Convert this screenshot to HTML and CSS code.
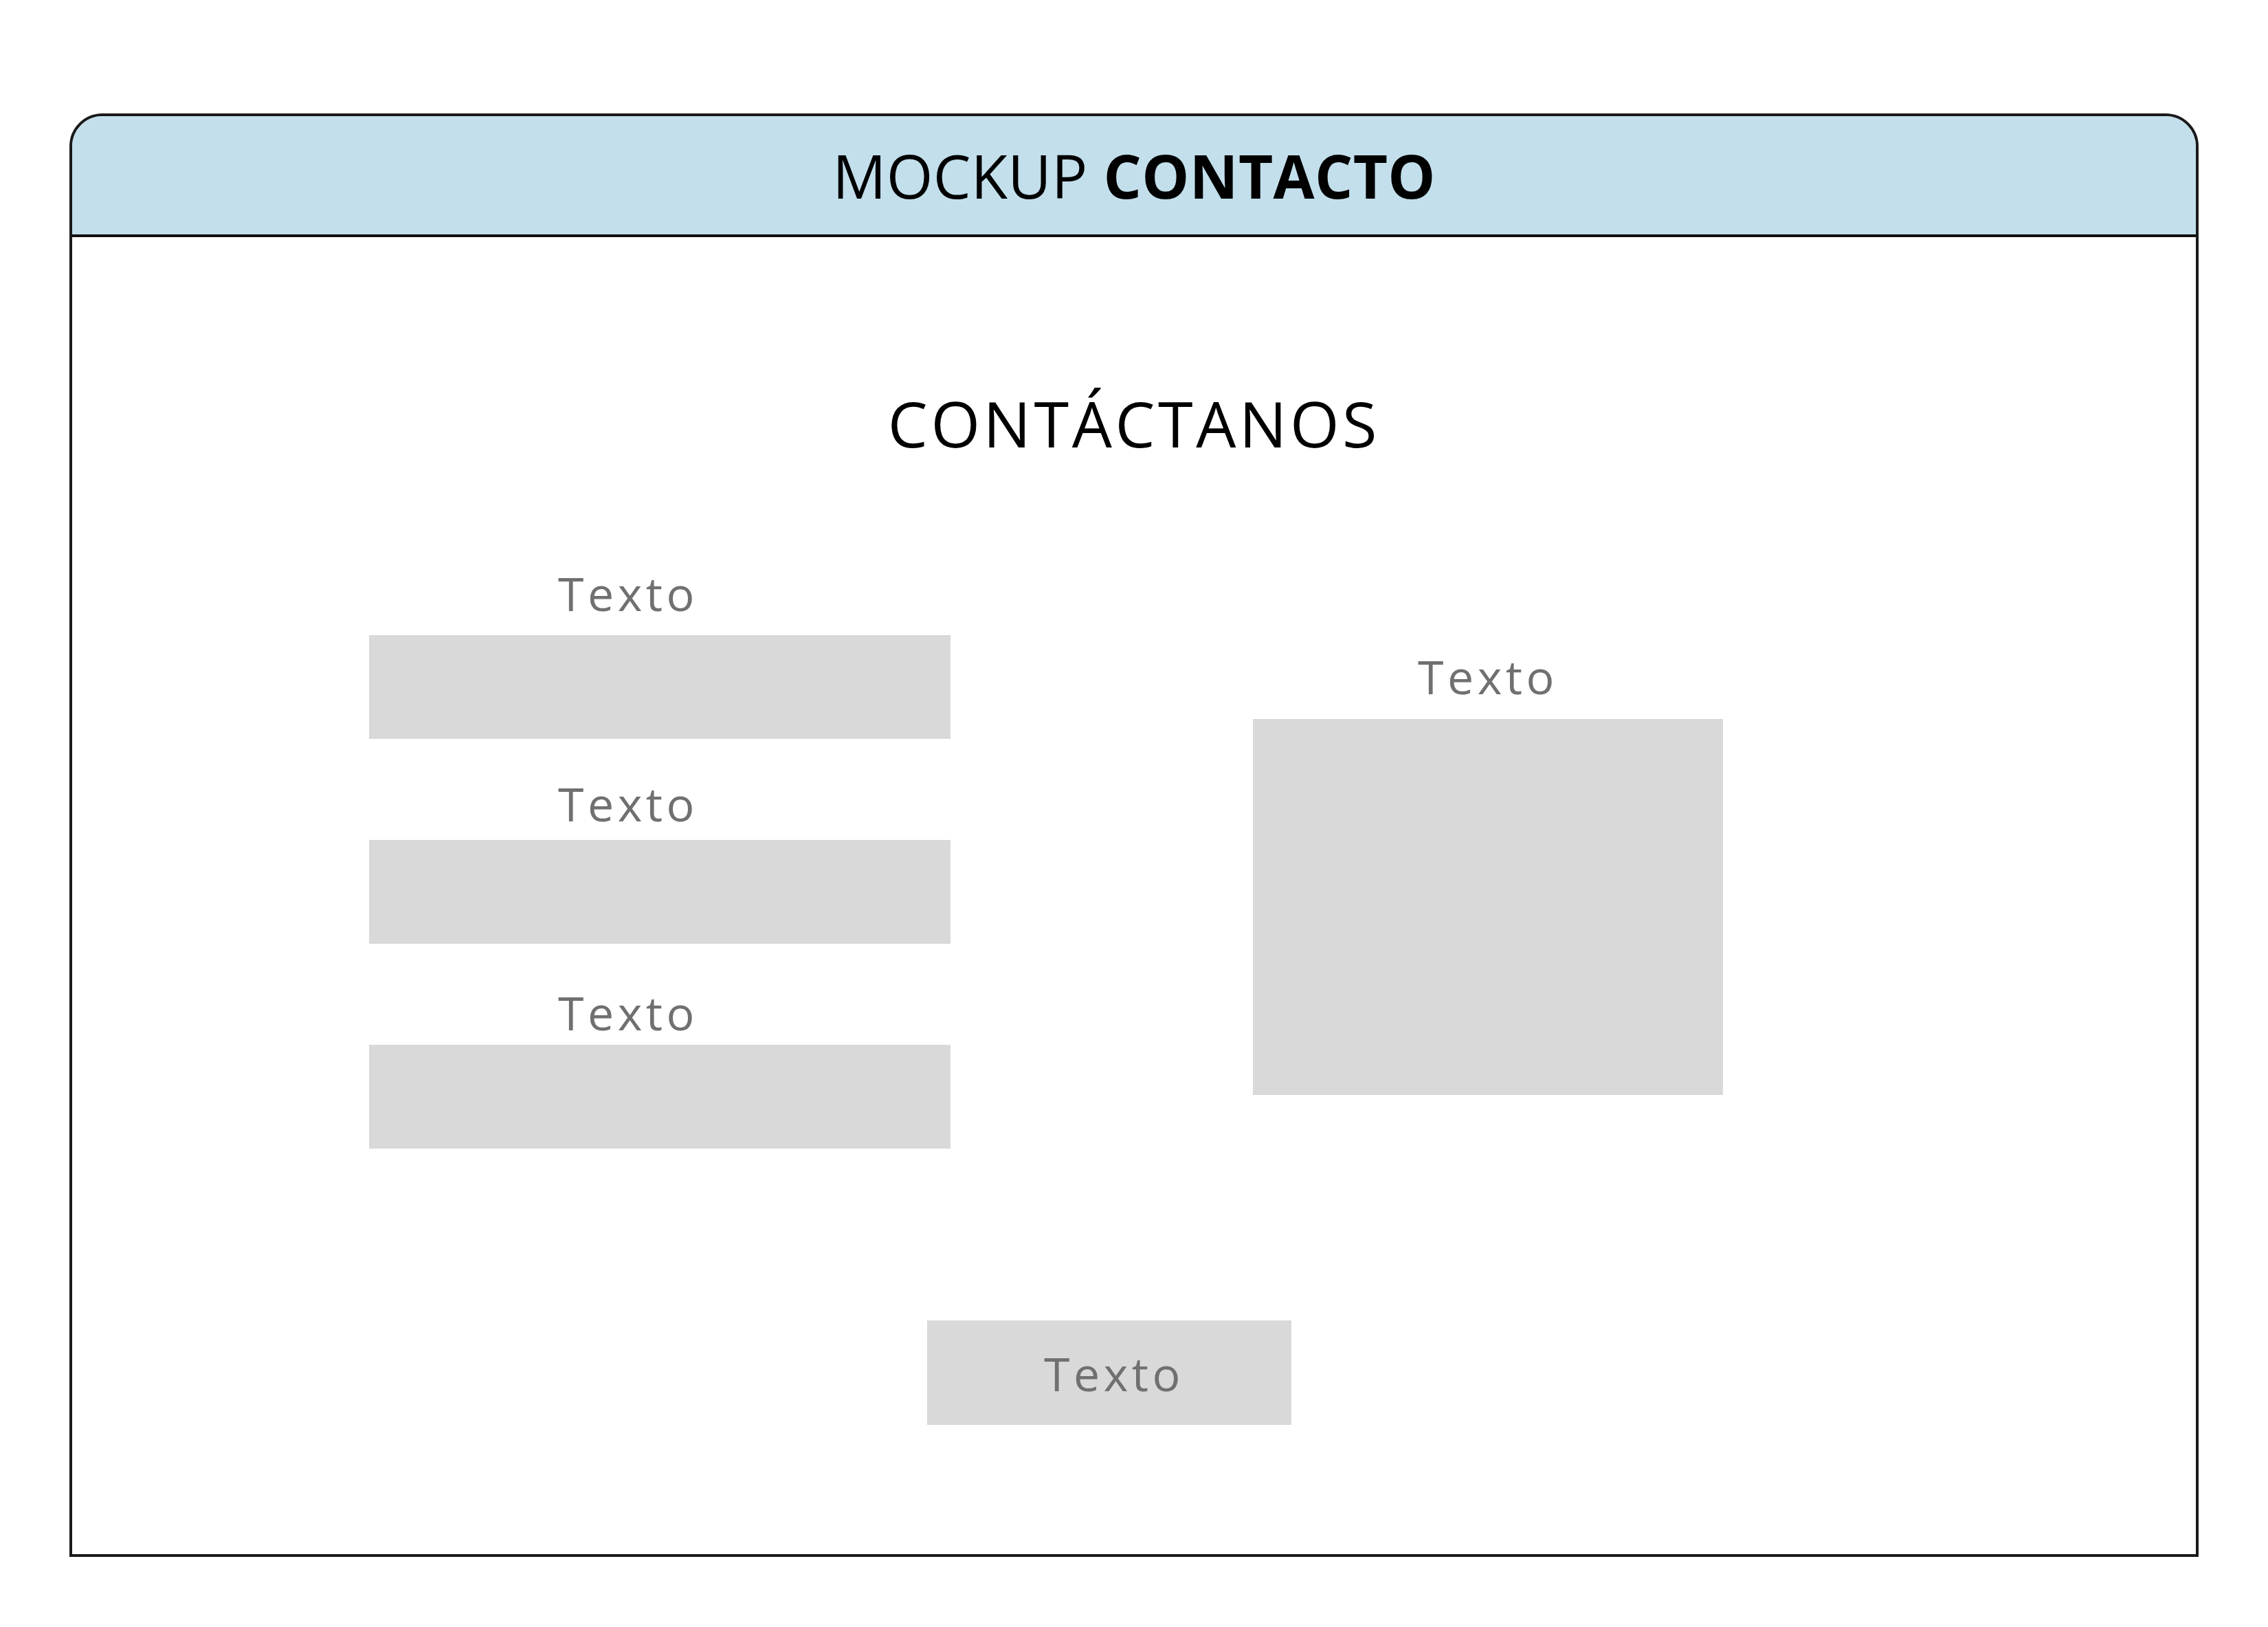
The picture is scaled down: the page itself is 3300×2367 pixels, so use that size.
FILE: index.html
```html
<!DOCTYPE html>
<html lang="es">
<head>
  <meta charset="UTF-8">
  <title>Mockup contacto</title>
  <link rel="stylesheet" href="styles.css">
</head>
<body>
  <div class="frame">
    <div class="header">
      <h1 class="title">MOCKUP <strong>CONTACTO</strong></h1>
    </div>
    <div class="content">
      <h2 class="heading">CONTÁCTANOS</h2>
      <div class="form">
        <div class="col left">
          <div class="field">
            <span class="label">Texto</span>
            <div class="input"></div>
          </div>
          <div class="field second">
            <span class="label">Texto</span>
            <div class="input"></div>
          </div>
          <div class="field third">
            <span class="label">Texto</span>
            <div class="input"></div>
          </div>
        </div>
        <div class="col right">
          <span class="label centered">Texto</span>
          <div class="textarea"></div>
        </div>
      </div>
      <div class="actions">
        <div class="button">Texto</div>
      </div>
    </div>
  </div>
</body>
</html>
```

FILE: styles.css
```css
body {
  margin: 0;
  padding: 165px 101px 0;
  background: #fff;
  font-family: "Open Sans", "Noto Sans", sans-serif;
}

.frame {
  border: 4px solid #1a1a1a;
  border-radius: 48px 48px 0 0;
  overflow: hidden;
}

.header {
  height: 172px;
  background: #c3dfec;
  border-bottom: 4px solid #111;
  display: flex;
  justify-content: center;
  align-items: center;
}

.title {
  margin: 0;
  font-size: 87px;
  line-height: 1;
  font-weight: 400;
  color: #000;
  letter-spacing: 0.3px;
}

.title strong {
  font-weight: 700;
}

.content {
  padding: 225px 0 188px;
}

.heading {
  margin: 0;
  text-align: center;
  font-size: 92px;
  line-height: 92px;
  font-weight: 400;
  color: #000;
  letter-spacing: 4.6px;
}

.form {
  display: flex;
  align-items: flex-start;
  gap: 440px;
  padding-left: 432px;
  margin-top: 167px;
}

.col {
  display: flex;
  flex-direction: column;
}

.col.left {
  width: 846px;
  gap: 52px;
}

.col.right {
  width: 684px;
  margin-top: 121px;
}

.field {
  display: flex;
  flex-direction: column;
}

.label {
  font-size: 68px;
  line-height: 68px;
  color: #707070;
  letter-spacing: 5.5px;
  margin-bottom: 27px;
  padding-left: 275px;
}

.field.second .label {
  margin-top: 8px;
  margin-bottom: 19px;
}

.field.third .label {
  margin-top: 14px;
  margin-bottom: 13px;
}

.label.centered {
  padding-left: 0;
  text-align: center;
  margin-bottom: 28px;
}

.input {
  height: 151px;
  background: #d9d9d9;
}

.textarea {
  height: 547px;
  background: #d9d9d9;
}

.actions {
  display: flex;
  padding-left: 1244px;
  margin-top: 250px;
}

.button {
  width: 530px;
  height: 152px;
  box-sizing: border-box;
  padding-left: 14px;
  background: #d9d9d9;
  display: flex;
  justify-content: center;
  align-items: center;
  font-size: 68px;
  color: #707070;
  letter-spacing: 5.5px;
}
```
